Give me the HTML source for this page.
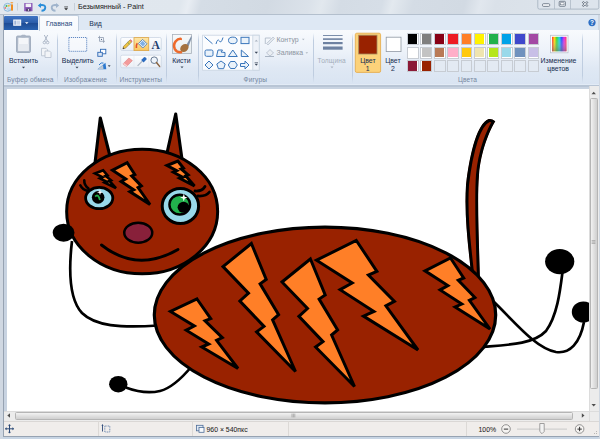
<!DOCTYPE html>
<html><head><meta charset="utf-8">
<style>
*{margin:0;padding:0;box-sizing:border-box}
html,body{width:600px;height:439px;overflow:hidden;background:#c8d5e4;font-family:"Liberation Sans",sans-serif;position:relative}
.a{position:absolute}
.t{position:absolute;white-space:nowrap;font-size:6.9px;color:#1a2f52;line-height:7px;-webkit-text-stroke:0.04px currentColor}
.g{position:absolute;white-space:nowrap;font-size:6.6px;color:#7586a0;line-height:7px;letter-spacing:0.15px}
.sep{position:absolute;width:1px;background:linear-gradient(rgba(190,204,222,0),#bfcde0 15%,#bfcde0 85%,rgba(190,204,222,0))}
.sw{position:absolute;width:12px;height:12px;border:1px solid #c9ced6;background:#e0e8f2}
.sw i{position:absolute;left:1px;top:1px;width:8px;height:8px;border:0}
</style></head><body>
<!-- title bar -->
<div class="a" style="left:0;top:0;width:600px;height:15px;background:linear-gradient(105deg,#e2e8ef 0px,#e0e7ee 175px,#e8edf3 183px,#d5dde6 195px,#d2dae3 260px,#dbe2ea 300px,#e2e8ee 312px,#d4dce5 330px,#d6dee7 370px,#e3e9ef 380px,#d4dce5 400px,#d2dae3 450px,#e1e7ee 465px,#dae1e9 480px,#dfe6ed 600px)"></div>
<div class="a" style="left:0;top:14px;width:600px;height:1px;background:#b3bfcd"></div>
<!-- tab row -->
<div class="a" style="left:3px;top:15px;width:595px;height:15px;background:#dee8f4"></div>
<div class="a" style="left:0;top:15px;width:3px;height:424px;background:#d0d8e2"></div>
<div class="a" style="left:2.7px;top:15px;width:1px;height:421px;background:#97a3b2"></div>
<div class="a" style="left:598px;top:15px;width:2px;height:424px;background:#d0d8e2"></div>



<!-- ribbon -->
<div class="a" style="left:3.5px;top:29.5px;width:595px;height:1px;background:#c3d0e1"></div>
<div class="a" style="left:3.5px;top:30px;width:595px;height:55px;background:linear-gradient(#f8fafd 0%,#eef3fa 35%,#dfe8f4 70%,#d9e4f2 100%)"></div>
<div class="a" style="left:3.5px;top:84px;width:595px;height:1px;background:#e2ebf6"></div>
<div class="a" style="left:3.5px;top:85px;width:595px;height:1.5px;background:#b8c5d5"></div>
<!-- app button -->
<div class="a" style="left:3.5px;top:16px;width:34.5px;height:14px;background:linear-gradient(#3f74c4,#2a5ca8 50%,#1d4b94 51%,#2a62b0);border-radius:1px 1px 0 0"></div>
<!-- tab Главная -->
<div class="a" style="left:39px;top:15.2px;width:39.5px;height:15.5px;background:linear-gradient(#fbfcfe,#f6f9fd);border:1px solid #c0cddd;border-bottom:0;border-radius:2px 2px 0 0"></div>
<div class="t" style="left:46px;top:19.6px;color:#2b4a7e">Главная</div>
<div class="t" style="left:89.3px;top:19.6px;color:#1f3358">Вид</div>
<!-- title text -->
<div class="t" style="left:78px;top:3.4px;font-size:7.2px;color:#202020;-webkit-text-stroke:0">Безымянный - Paint</div>

<!-- ===== RIBBON CONTENT ===== -->
<!-- group separators -->
<div class="sep" style="left:57px;top:33px;height:50px"></div>
<div class="sep" style="left:116px;top:33px;height:50px"></div>
<div class="sep" style="left:166px;top:33px;height:50px"></div>
<div class="sep" style="left:198px;top:33px;height:50px"></div>
<div class="sep" style="left:313px;top:33px;height:50px"></div>
<div class="sep" style="left:352px;top:33px;height:50px"></div>
<div class="sep" style="left:582px;top:33px;height:50px"></div>
<!-- group labels -->
<div class="g" style="left:7px;top:76.4px">Буфер обмена</div>
<div class="g" style="left:64px;top:76.4px">Изображение</div>
<div class="g" style="left:119.5px;top:76.4px">Инструменты</div>
<div class="g" style="left:243.5px;top:76.4px">Фигуры</div>
<div class="g" style="left:458px;top:76.4px">Цвета</div>
<!-- Clipboard -->
<svg class="a" style="left:0;top:0" width="600" height="90" viewBox="0 0 600 90">
 <rect x="16.5" y="36" width="14" height="16.5" rx="1.2" fill="#aeb9c9" stroke="#98a5b8" stroke-width="0.8"/>
 <rect x="18.3" y="37.8" width="10.4" height="13" fill="#f4f6f9"/>
 <rect x="18.3" y="44" width="10.4" height="6.8" fill="#e6eaf0"/>
 <rect x="21.2" y="34.8" width="4.6" height="2.6" rx="1" fill="#aab5c5"/>
 <!-- scissors -->
 <path d="M44.3,35 L47.7,41.5 M47.7,35 L44.3,41.5" stroke="#a3aec0" stroke-width="0.9" fill="none"/>
 <circle cx="44.4" cy="42.5" r="1.3" fill="none" stroke="#a3aec0" stroke-width="0.8"/>
 <circle cx="47.6" cy="42.5" r="1.3" fill="none" stroke="#a3aec0" stroke-width="0.8"/>
 <!-- copy -->
 <path d="M41.5,48.3 h4.5 l1.5,1.5 v6 h-6z" fill="#f2f4f7" stroke="#b5bfcd" stroke-width="0.8"/>
 <path d="M45,51 h4.5 l1.5,1.5 v5 h-6z" fill="#f2f4f7" stroke="#b5bfcd" stroke-width="0.8"/>
 <!-- arrows -->
 <path d="M22,66.8 h3 l-1.5,1.7z" fill="#3d4a5c"/>
 <path d="M75.5,66.8 h3 l-1.5,1.7z" fill="#3d4a5c"/>
 <path d="M180.5,66.6 h3 l-1.5,1.7z" fill="#3d4a5c"/>
 <path d="M330.5,66.6 h3 l-1.5,1.7z" fill="#a9b2bf"/>
 <!-- select dotted rect -->
 <rect x="68.9" y="37.5" width="17.8" height="13.8" fill="#fbfcfe" fill-opacity="0.5" stroke="#3a6cb4" stroke-width="0.9" stroke-dasharray="1 1"/>
 <!-- crop -->
 <path d="M99.5,35.8 v5.5 h5.5 M98,37.5 h5.5 v5.3" stroke="#8f9cb0" stroke-width="0.8" fill="none"/>
 <circle cx="101.5" cy="39.4" r="0.6" fill="#5c6f8c"/>
 <!-- resize -->
 <rect x="100.5" y="49.3" width="5.3" height="4.5" fill="#fff" stroke="#2f69b5" stroke-width="0.9"/>
 <rect x="97.8" y="52.3" width="4.5" height="4" fill="#dbe7f6" stroke="#2f69b5" stroke-width="0.9"/>
 <!-- rotate -->
 <path d="M97.5,69.3 L105.5,62.8 L106.3,69.3z" fill="#2a78cf"/>
 <path d="M97.5,69.3 L103,65 L103.5,69.3z" fill="#bcc7d4"/>
 <path d="M99,65 Q101,62 103.5,63" stroke="#2a78cf" stroke-width="1" fill="none"/>
 <path d="M107.8,65.3 h2.8 l-1.4,1.6z" fill="#3d4a5c"/>
 <!-- tools group frame -->
 <defs><linearGradient id="tb" x1="0" x2="0" y1="0" y2="1"><stop offset="0" stop-color="#fdfeff"/><stop offset="1" stop-color="#e9eef5"/></linearGradient>
 <linearGradient id="hl" x1="0" x2="0" y1="0" y2="1"><stop offset="0" stop-color="#fde5a5"/><stop offset="1" stop-color="#fbc761"/></linearGradient></defs>
 <rect x="120.7" y="37.5" width="40.6" height="13" rx="1.5" fill="url(#tb)" stroke="#ccd6e3" stroke-width="0.8"/>
 <rect x="120.7" y="55.2" width="40.6" height="12.6" rx="1.5" fill="url(#tb)" stroke="#ccd6e3" stroke-width="0.8"/>
 <path d="M134,38 v12 M148.7,38 v12 M134,55.7 v11.6 M148.7,55.7 v11.6" stroke="#e2e8f0" stroke-width="0.6"/>
 <rect x="134" y="37.6" width="14.7" height="13" fill="url(#hl)" stroke="#dea646" stroke-width="0.8"/>
 <!-- pencil -->
 <path d="M122.8,48.9 L123.6,46.3 L129.8,40.1 L131.7,42 L125.5,48.2z" fill="#f0c443" stroke="#6d5a2a" stroke-width="0.45"/>
 <path d="M127.6,42.3 L129.5,44.2" stroke="#5aa05a" stroke-width="0.8"/>
 <path d="M129.8,40.1 L130.6,39.3 L132.5,41.2 L131.7,42z" fill="#e06070"/>
 <path d="M122.8,48.9 L123.3,47.3 L124.4,48.4z" fill="#333"/>
 <!-- fill bucket -->
 <path d="M138.4,43.6 L142.6,39.4 L147,43.8 L142.8,48z" fill="#f4f7fb" stroke="#3b73b9" stroke-width="0.8"/>
 <path d="M139.8,43.4 L142.6,40.8 L145.5,43.8 L142.8,46.5z" fill="#7fb0e6"/>
 <path d="M137.3,43.3 Q136,45 136.4,48" stroke="#e2502a" stroke-width="1.6" fill="none"/>
 <!-- text A -->
 <text x="151.6" y="48.8" font-family="Liberation Serif" font-weight="bold" font-size="11.6" fill="#1f3f6e">A</text>
 <!-- eraser -->
 <path d="M122.9,64 L128.8,58 L132.4,60.6 L126.6,66.5z" fill="#f39a9a" stroke="#d77777" stroke-width="0.5"/>
 <path d="M122.9,64 L126.6,66.5 L127.5,65.6 L123.8,63.1z" fill="#fbd0d0"/>
 <!-- picker -->
 <path d="M137.6,65.8 L142.3,61.1" stroke="#aab4c0" stroke-width="1.2"/>
 <path d="M141.2,60 L144.3,56.9 Q146.8,57 146.7,59.3 L143.6,62.4z" fill="#2c6cc0"/>
 <!-- magnifier -->
 <circle cx="154.2" cy="60.2" r="3.3" fill="#eef4fb" stroke="#5a6e88" stroke-width="0.9"/>
 <path d="M156.5,62.5 L159.6,66.4" stroke="#8a6440" stroke-width="1.5" stroke-linecap="round"/>
 <!-- brushes -->
 <defs><linearGradient id="bf" x1="0" x2="0" y1="0" y2="1"><stop offset="0" stop-color="#f7f9fb"/><stop offset="1" stop-color="#e6ecef"/></linearGradient></defs>
 <rect x="172.5" y="34.5" width="19" height="19" fill="url(#bf)" stroke="#a9b1bb" stroke-width="0.8"/>
 <path d="M180.6,38.8 Q178,38.6 175.5,41.5 Q173,45 174.8,49 Q176.5,52.5 181,52.3" fill="none" stroke="#ee6a2c" stroke-width="2.6" stroke-linecap="round"/>
 <path d="M180.6,38.8 Q181.5,39 181.2,40" fill="none" stroke="#ee6a2c" stroke-width="1.2"/>
 <path d="M186.5,44.8 L191.4,35.8 L191.6,38 L188.6,46.5z" fill="#7e8fa8"/>
 <ellipse cx="184.4" cy="48" rx="4.6" ry="3.6" transform="rotate(-40 184.4 48)" fill="#a4713f"/>
 <!-- shapes gallery -->
 <rect x="202.6" y="35.2" width="56.6" height="35" fill="#fbfcfe" stroke="#c9d4e2" stroke-width="0.8"/>
 <rect x="252.8" y="35.2" width="6.4" height="35" fill="#eef2f8" stroke="#c9d4e2" stroke-width="0.8"/>
 <path d="M254.6,41.6 h3.4 l-1.7,-1.9z" fill="#aab3bf"/>
 <path d="M254.6,51.8 h3.4 l-1.7,1.9z" fill="#3e4a5c"/>
 <path d="M254.6,62.6 h3.4" stroke="#3e4a5c" stroke-width="0.6"/>
 <path d="M254.6,63.8 h3.4 l-1.7,1.9z" fill="#3e4a5c"/>
 <g stroke="#3a76bb" stroke-width="1" fill="#eaf2fa">
  <path d="M204.5,36.8 L212.5,43.8" fill="none"/>
  <path d="M216,44 Q217.5,38 219.5,41 Q221,44 223,37.5" fill="none"/>
  <ellipse cx="232.8" cy="40.4" rx="4.3" ry="3.3"/>
  <rect x="241" y="37.3" width="8" height="6.3"/>
  <rect x="205" y="50" width="8" height="6.3" rx="1.5"/>
  <path d="M216.5,56.5 L218,50 L222.5,50 L221,52 L225,52.5 L225,56.5z"/>
  <path d="M228.3,56.5 L232.8,50 L237.3,56.5z"/>
  <path d="M241.3,50 L241.3,56.5 L248.5,56.5z"/>
  <path d="M209,61 L213,65 L209,69 L205,65z"/>
  <path d="M221,61 L225.2,64 L223.6,68.7 L218.4,68.7 L216.8,64z"/>
  <path d="M230.5,61.5 L235,61.5 L237.3,65 L235,68.5 L230.5,68.5 L228.3,65z"/>
  <path d="M240.5,63.5 h4.5 v-2.5 l4,4 l-4,4 v-2.5 h-4.5z"/>
 </g>
 <!-- outline/fill -->
 <path d="M265.3,44 L265.3,38 L270.8,38" stroke="#aab5c4" stroke-width="0.8" fill="none"/>
 <path d="M266.5,43.5 L273,37 L274.5,38.5 L268,45z" fill="#e2e7ee" stroke="#aab5c4" stroke-width="0.6"/>
 <path d="M302,38.8 h2.6 l-1.3,1.5z" fill="#aeb7c3"/>
 <path d="M265,56 h9 v1 h-9z" fill="#aab5c4"/>
 <path d="M266.5,53 L270,49.5 L273.5,53 L270,56z" fill="#e9edf2" stroke="#aab5c4" stroke-width="0.7"/>
 <path d="M305.5,52.3 h2.6 l-1.3,1.5z" fill="#aeb7c3"/>
 <!-- size lines -->
 <rect x="323" y="35" width="19.6" height="0.9" fill="#6e82a2"/>
 <rect x="323" y="38.3" width="19.6" height="1.6" fill="#6e82a2"/>
 <rect x="323" y="42" width="19.6" height="2.2" fill="#6e82a2"/>
 <rect x="323" y="46.5" width="19.6" height="3.2" fill="#6e82a2"/>
 <!-- color1 button -->
 <rect x="355.3" y="33.2" width="25.3" height="39.2" rx="1.5" fill="#fcd27a" stroke="#e5a845" stroke-width="0.8"/>
 <rect x="358.7" y="35.2" width="18.3" height="18.8" fill="#992200" stroke="#a38a5e" stroke-width="0.8"/>
 <rect x="386.2" y="37.2" width="14.8" height="14.4" fill="#fff" stroke="#8f98a4" stroke-width="0.8"/>
 <!-- edit colors -->
 <defs>
  <linearGradient id="rb" x1="0" x2="1" y1="0" y2="0">
   <stop offset="0" stop-color="#ff2a2a"/><stop offset="0.17" stop-color="#ffd400"/><stop offset="0.33" stop-color="#2fd62f"/><stop offset="0.5" stop-color="#14d6e6"/><stop offset="0.67" stop-color="#2a3cff"/><stop offset="0.83" stop-color="#e22ae6"/><stop offset="1" stop-color="#ff2a5a"/>
  </linearGradient>
  <linearGradient id="rbw" x1="0" x2="0" y1="0" y2="1">
   <stop offset="0" stop-color="#fff" stop-opacity="0"/><stop offset="1" stop-color="#777" stop-opacity="0.6"/>
  </linearGradient>
 </defs>
 <rect x="550.5" y="35.3" width="17.5" height="17.5" fill="#fff" stroke="#b9c2ce" stroke-width="0.8"/>
 <rect x="552" y="36.8" width="14.5" height="14.5" fill="url(#rb)"/>
 <rect x="552" y="36.8" width="14.5" height="14.5" fill="url(#rbw)"/>
</svg>
<!-- ribbon texts -->
<div class="t" style="left:9px;top:57.2px">Вставить</div>
<div class="t" style="left:61.8px;top:57.2px">Выделить</div>
<div class="t" style="left:172.2px;top:57px">Кисти</div>
<div class="t" style="left:276.5px;top:36.2px;color:#8f97a4">Контур</div>
<div class="t" style="left:276.5px;top:49.3px;color:#8f97a4">Заливка</div>
<div class="g" style="left:317.5px;top:57px;color:#a3adba">Толщина</div>
<div class="t" style="left:360.2px;top:57px">Цвет</div>
<div class="t" style="left:365.8px;top:65px">1</div>
<div class="t" style="left:385.2px;top:57px">Цвет</div>
<div class="t" style="left:391px;top:65px">2</div>
<div class="t" style="left:540.6px;top:57px">Изменение</div>
<div class="t" style="left:547.3px;top:65px">цветов</div>
<!-- palette -->
<div class="a" style="left:407.0px;top:33.0px;width:11.8px;height:12px;background:#fff;border:1px solid #c7ccd3"><div class="a" style="left:0.3px;top:0.3px;width:9.2px;height:9.4px;background:#000000"></div></div>
<div class="a" style="left:420.4px;top:33.0px;width:11.8px;height:12px;background:#fff;border:1px solid #c7ccd3"><div class="a" style="left:0.3px;top:0.3px;width:9.2px;height:9.4px;background:#7f7f7f"></div></div>
<div class="a" style="left:433.8px;top:33.0px;width:11.8px;height:12px;background:#fff;border:1px solid #c7ccd3"><div class="a" style="left:0.3px;top:0.3px;width:9.2px;height:9.4px;background:#880015"></div></div>
<div class="a" style="left:447.2px;top:33.0px;width:11.8px;height:12px;background:#fff;border:1px solid #c7ccd3"><div class="a" style="left:0.3px;top:0.3px;width:9.2px;height:9.4px;background:#ed1c24"></div></div>
<div class="a" style="left:460.6px;top:33.0px;width:11.8px;height:12px;background:#fff;border:1px solid #c7ccd3"><div class="a" style="left:0.3px;top:0.3px;width:9.2px;height:9.4px;background:#ff7f27"></div></div>
<div class="a" style="left:474.0px;top:33.0px;width:11.8px;height:12px;background:#fff;border:1px solid #c7ccd3"><div class="a" style="left:0.3px;top:0.3px;width:9.2px;height:9.4px;background:#fff200"></div></div>
<div class="a" style="left:487.4px;top:33.0px;width:11.8px;height:12px;background:#fff;border:1px solid #c7ccd3"><div class="a" style="left:0.3px;top:0.3px;width:9.2px;height:9.4px;background:#22b14c"></div></div>
<div class="a" style="left:500.8px;top:33.0px;width:11.8px;height:12px;background:#fff;border:1px solid #c7ccd3"><div class="a" style="left:0.3px;top:0.3px;width:9.2px;height:9.4px;background:#00a2e8"></div></div>
<div class="a" style="left:514.2px;top:33.0px;width:11.8px;height:12px;background:#fff;border:1px solid #c7ccd3"><div class="a" style="left:0.3px;top:0.3px;width:9.2px;height:9.4px;background:#3f48cc"></div></div>
<div class="a" style="left:527.6px;top:33.0px;width:11.8px;height:12px;background:#fff;border:1px solid #c7ccd3"><div class="a" style="left:0.3px;top:0.3px;width:9.2px;height:9.4px;background:#a349a4"></div></div>
<div class="a" style="left:407.0px;top:46.5px;width:11.8px;height:12px;background:#fff;border:1px solid #c7ccd3"><div class="a" style="left:0.3px;top:0.3px;width:9.2px;height:9.4px;background:#ffffff"></div></div>
<div class="a" style="left:420.4px;top:46.5px;width:11.8px;height:12px;background:#fff;border:1px solid #c7ccd3"><div class="a" style="left:0.3px;top:0.3px;width:9.2px;height:9.4px;background:#c3c3c3"></div></div>
<div class="a" style="left:433.8px;top:46.5px;width:11.8px;height:12px;background:#fff;border:1px solid #c7ccd3"><div class="a" style="left:0.3px;top:0.3px;width:9.2px;height:9.4px;background:#b97a57"></div></div>
<div class="a" style="left:447.2px;top:46.5px;width:11.8px;height:12px;background:#fff;border:1px solid #c7ccd3"><div class="a" style="left:0.3px;top:0.3px;width:9.2px;height:9.4px;background:#ffaec9"></div></div>
<div class="a" style="left:460.6px;top:46.5px;width:11.8px;height:12px;background:#fff;border:1px solid #c7ccd3"><div class="a" style="left:0.3px;top:0.3px;width:9.2px;height:9.4px;background:#ffc90e"></div></div>
<div class="a" style="left:474.0px;top:46.5px;width:11.8px;height:12px;background:#fff;border:1px solid #c7ccd3"><div class="a" style="left:0.3px;top:0.3px;width:9.2px;height:9.4px;background:#efe4b0"></div></div>
<div class="a" style="left:487.4px;top:46.5px;width:11.8px;height:12px;background:#fff;border:1px solid #c7ccd3"><div class="a" style="left:0.3px;top:0.3px;width:9.2px;height:9.4px;background:#b5e61d"></div></div>
<div class="a" style="left:500.8px;top:46.5px;width:11.8px;height:12px;background:#fff;border:1px solid #c7ccd3"><div class="a" style="left:0.3px;top:0.3px;width:9.2px;height:9.4px;background:#99d9ea"></div></div>
<div class="a" style="left:514.2px;top:46.5px;width:11.8px;height:12px;background:#fff;border:1px solid #c7ccd3"><div class="a" style="left:0.3px;top:0.3px;width:9.2px;height:9.4px;background:#7092be"></div></div>
<div class="a" style="left:527.6px;top:46.5px;width:11.8px;height:12px;background:#fff;border:1px solid #c7ccd3"><div class="a" style="left:0.3px;top:0.3px;width:9.2px;height:9.4px;background:#c8bfe7"></div></div>
<div class="a" style="left:407.0px;top:60.0px;width:11.8px;height:12px;background:#fff;border:1px solid #c7ccd3"><div class="a" style="left:0.3px;top:0.3px;width:9.2px;height:9.4px;background:#8b1a37"></div></div>
<div class="a" style="left:420.4px;top:60.0px;width:11.8px;height:12px;background:#fff;border:1px solid #c7ccd3"><div class="a" style="left:0.3px;top:0.3px;width:9.2px;height:9.4px;background:#992200"></div></div>
<div class="a" style="left:433.8px;top:60.0px;width:11.8px;height:12px;background:#e3eaf3;border:1px solid #c7ccd3"></div>
<div class="a" style="left:447.2px;top:60.0px;width:11.8px;height:12px;background:#e3eaf3;border:1px solid #c7ccd3"></div>
<div class="a" style="left:460.6px;top:60.0px;width:11.8px;height:12px;background:#e3eaf3;border:1px solid #c7ccd3"></div>
<div class="a" style="left:474.0px;top:60.0px;width:11.8px;height:12px;background:#e3eaf3;border:1px solid #c7ccd3"></div>
<div class="a" style="left:487.4px;top:60.0px;width:11.8px;height:12px;background:#e3eaf3;border:1px solid #c7ccd3"></div>
<div class="a" style="left:500.8px;top:60.0px;width:11.8px;height:12px;background:#e3eaf3;border:1px solid #c7ccd3"></div>
<div class="a" style="left:514.2px;top:60.0px;width:11.8px;height:12px;background:#e3eaf3;border:1px solid #c7ccd3"></div>
<div class="a" style="left:527.6px;top:60.0px;width:11.8px;height:12px;background:#e3eaf3;border:1px solid #c7ccd3"></div>

<!-- quick access -->
<svg class="a" style="left:0;top:0" width="600" height="32" viewBox="0 0 600 32">
 <!-- paint app icon -->
 <circle cx="7.7" cy="7.3" r="4" fill="#d6e6f3" stroke="#8db9dc" stroke-width="1"/>
 <circle cx="6.5" cy="6" r="1" fill="#49b84a"/>
 <circle cx="8.8" cy="5.7" r="1" fill="#f4b73a"/>
 <circle cx="5.3" cy="7.9" r="0.9" fill="#e9776a"/>
 <circle cx="8.5" cy="9" r="0.9" fill="#eef4fa" stroke="#8db9dc" stroke-width="0.6"/>
 <rect x="11" y="4.3" width="2" height="6.4" rx="0.8" fill="#f08c1e"/>
 <ellipse cx="11.8" cy="2.7" rx="1.5" ry="0.8" fill="#f3a24a"/>
 <rect x="17" y="3" width="0.8" height="7.5" fill="#bfc8d3"/>
 <!-- save -->
 <rect x="24.2" y="3" width="8.3" height="8.3" rx="0.6" fill="#8b5ab8"/>
 <rect x="25.6" y="3.6" width="5.5" height="3.4" fill="#f2f0f6"/>
 <rect x="26.2" y="8.6" width="4.3" height="2.7" fill="#4c3a66"/>
 <rect x="27.9" y="9" width="1.2" height="1.8" fill="#d8d0e6"/>
 <!-- undo -->
 <path d="M39.5,5.3 Q45.5,4.2 45.3,7.6 Q45,10.8 41.5,10.8" stroke="#2b8ed8" stroke-width="1.9" fill="none"/>
 <path d="M37.8,5.4 L41,2.9 L41,7.9z" fill="#2b8ed8"/>
 <!-- redo -->
 <path d="M57.5,5.3 Q51.5,4.2 51.7,7.6 Q52,10.8 55.5,10.8" stroke="#9fb4cc" stroke-width="1.9" fill="none"/>
 <path d="M59.2,5.4 L56,2.9 L56,7.9z" fill="#9fb4cc"/>
 <!-- customize -->
 <rect x="64.2" y="6.6" width="3.8" height="0.7" fill="#222"/>
 <path d="M64.2,8.2 h3.8 l-1.9,2z" fill="#222"/>
 <rect x="74" y="3" width="0.8" height="7.5" fill="#bfc8d3"/>
 <!-- app button icon -->
 <rect x="13.2" y="19.5" width="8" height="6.3" fill="#fff" opacity="0.95"/>
 <rect x="14.3" y="20.6" width="2" height="4.1" fill="#9db3d6"/>
 <rect x="16.9" y="20.6" width="3.2" height="4.1" fill="#c9d6ea"/>
 <path d="M25,22.2 h3.5 l-1.75,1.9z" fill="#fff"/>
 <!-- window buttons -->
 <path d="M537.8,0 v7.5 q0,1.6 1.6,1.6 h57.8 q1.6,0 1.6,-1.6 v-7.5" fill="#dde4ec" stroke="#9aa7b6" stroke-width="0.7"/>
 <rect x="554.3" y="0" width="0.7" height="9" fill="#aab5c2"/>
 <rect x="570.3" y="0" width="0.7" height="9" fill="#aab5c2"/>
 <rect x="542.5" y="3.7" width="7.2" height="2.7" rx="1" fill="#f4f6f9" stroke="#5f6b7a" stroke-width="0.8"/>
 <rect x="559.2" y="1.3" width="6.2" height="5" rx="0.8" fill="#e8ecf1" stroke="#5f6b7a" stroke-width="0.8"/>
 <rect x="560.6" y="2.8" width="3.4" height="2" fill="#fff" stroke="#5f6b7a" stroke-width="0.5"/>
 <path d="M582.5,1.7 L587.8,6.2 M587.8,1.7 L582.5,6.2" stroke="#5f6b7a" stroke-width="2"/>
 <path d="M582.5,1.7 L587.8,6.2 M587.8,1.7 L582.5,6.2" stroke="#f4f6f9" stroke-width="0.9"/>
 <!-- help -->
 <circle cx="592" cy="22.6" r="3.6" fill="#2e6fc4"/>
 <text x="590.1" y="25.2" font-family="Liberation Sans" font-weight="bold" font-size="6.5" fill="#fff">?</text>
</svg>
<!-- workspace -->
<div class="a" style="left:3.5px;top:86.5px;width:585.5px;height:324.5px;background:#c8d3e1"></div>
<div class="a" style="left:6.7px;top:89px;width:582.3px;height:322px;background:#fff"></div>
<svg class="a" style="left:0;top:0" width="600" height="439" viewBox="0 0 600 439"><defs><clipPath id="ctail"><path d="M488.7,119.1 C478,123 470,150 466,185 C464,215 468,245 472,282 L480,282 C479,240 477,200 479,175 C481,150 490,130 495.3,121.3 Q492,118.5 488.7,119.1Z"/></clipPath><clipPath id="cv"><rect x="6.7" y="89" width="582.3" height="322"/></clipPath></defs><g clip-path="url(#cv)"><g clip-path="url(#ctail)"><path d="M488.7,119.1 C478,123 470,150 466,185 C464,215 468,245 472,282 L480,282 C479,240 477,200 479,175 C481,150 490,130 495.3,121.3 Q492,118.5 488.7,119.1Z" fill="#992200" stroke="#000" stroke-width="6" stroke-linejoin="round"/></g><path d="M72,241 C68,275 70,300 82,313 C95,326 120,328 158,325.5" fill="none" stroke="#000" stroke-width="2.7"/><path d="M125.8,387.5 C135,391 147,394 160,391 C172,388 182,378 192,366" fill="none" stroke="#000" stroke-width="2.7"/><ellipse cx="118.3" cy="384.2" rx="9.20" ry="8.30" fill="#000" stroke="#000" stroke-width="0"/><path d="M562.5,272 C560,292 557,316 546,331 C533,345 505,345 480,347" fill="none" stroke="#000" stroke-width="2.7"/><path d="M492,300 C515,322 535,348 556,352 C570,354 580,343 584,322" fill="none" stroke="#000" stroke-width="2.7"/><ellipse cx="559.7" cy="261.6" rx="14.60" ry="12.60" fill="#000" stroke="#000" stroke-width="0"/><ellipse cx="583.3" cy="312" rx="11.50" ry="10.50" fill="#000" stroke="#000" stroke-width="0"/><polygon points="100.3,118 93.6,175 114.8,175" fill="#992200" stroke="#000" stroke-width="3.1" stroke-linejoin="round"/><polygon points="175.7,114 163.2,170 183.5,170" fill="#992200" stroke="#000" stroke-width="3.1" stroke-linejoin="round"/><ellipse cx="142.15" cy="211.5" rx="75.50" ry="62.30" fill="#992200" stroke="#000" stroke-width="3.0"/><polygon points="127.2,162.7 134.8,174.5 131.7,175.9 141.3,185.9 138.1,187.6 150.0,204.5 129.9,191.6 133.7,189.8 121.2,181.5 125.7,178.9 112.5,170.2" fill="#ff7f27" stroke="#000" stroke-width="3.0" stroke-linejoin="miter" stroke-miterlimit="4"/><polygon points="177.8,161.0 183.4,168.0 181.1,168.9 188.1,174.9 185.8,175.9 194.5,186.0 179.7,178.3 182.6,177.2 173.4,172.2 176.7,170.7 167.0,165.5" fill="#ff7f27" stroke="#000" stroke-width="3.0" stroke-linejoin="miter" stroke-miterlimit="4"/><polygon points="103.2,170.3 107.5,175.3 105.7,175.9 111.1,180.3 109.4,181.0 116.0,188.2 104.7,182.7 106.9,181.9 99.9,178.3 102.4,177.2 95.0,173.5" fill="#ff7f27" stroke="#000" stroke-width="2.6" stroke-linejoin="miter" stroke-miterlimit="4"/><ellipse cx="63.6" cy="232.7" rx="10.90" ry="9.00" fill="#000" stroke="#000" stroke-width="0"/><path d="M84.3,180.3 Q84,185 88.5,188.5 M80.3,185.3 Q82.5,189.8 88,191" fill="none" stroke="#000" stroke-width="2.6" stroke-linecap="round"/><path d="M195,191 Q202,191.5 205,186.5 M198,196 Q206,196.5 209.5,192" fill="none" stroke="#000" stroke-width="2.8" stroke-linecap="round"/><ellipse cx="99.2" cy="198.05" rx="13.60" ry="10.60" fill="#99d9ea" stroke="#000" stroke-width="2.8"/><ellipse cx="98.15" cy="197.35" rx="6.30" ry="6.30" fill="#000" stroke="#000" stroke-width="0"/><path d="M95.2,196.6 Q98.2,193 99.9,200" fill="none" stroke="#22b14c" stroke-width="1.8"/><ellipse cx="180.4" cy="206" rx="18.20" ry="17.60" fill="#99d9ea" stroke="#000" stroke-width="3.0"/><ellipse cx="179.75" cy="204.6" rx="10.35" ry="9.90" fill="#22b14c" stroke="#000" stroke-width="2.4"/><ellipse cx="183.5" cy="207.3" rx="5.90" ry="5.50" fill="#000" stroke="#000" stroke-width="0"/><path d="M100,189.3 L100.75,191.55 L103.0,192.3 L100.75,193.05 L100,195.3 L99.25,193.05 L97.0,192.3 L99.25,191.55Z" fill="#fff"/><path d="M183.8,193.79999999999998 L184.75,196.65 L187.60000000000002,197.6 L184.75,198.54999999999998 L183.8,201.4 L182.85000000000002,198.54999999999998 L180.0,197.6 L182.85000000000002,196.65Z" fill="#fff"/><ellipse cx="138.25" cy="232.75" rx="14.00" ry="10.00" fill="#88203a" stroke="#000" stroke-width="2.5"/><path d="M101.5,245 Q137,273 178,249.5" fill="none" stroke="#000" stroke-width="2.9" stroke-linecap="round"/><ellipse cx="325" cy="315" rx="170.70" ry="87.90" fill="#992200" stroke="#000" stroke-width="3.2"/><polygon points="197.0,299.0 210.7,318.6 205.0,320.9 222.3,337.6 216.6,340.4 238.0,368.5 201.8,347.0 208.7,344.0 186.2,330.2 194.3,326.0 170.5,311.5" fill="#ff7f27" stroke="#000" stroke-width="3.0" stroke-linejoin="miter" stroke-miterlimit="4"/><polygon points="251.4,243.5 266.2,279.5 260.1,283.8 278.6,314.7 272.6,319.8 295.5,371.5 256.6,331.9 264.0,326.4 239.9,301.0 248.5,293.2 223.0,266.6" fill="#ff7f27" stroke="#000" stroke-width="3.0" stroke-linejoin="miter" stroke-miterlimit="4"/><polygon points="310.4,259.0 325.2,294.9 319.1,299.1 337.6,329.9 331.6,335.0 354.5,386.5 315.6,347.0 323.0,341.6 298.9,316.3 307.5,308.5 282.0,282.0" fill="#ff7f27" stroke="#000" stroke-width="3.0" stroke-linejoin="miter" stroke-miterlimit="4"/><polygon points="356.3,240.5 376.9,271.3 368.4,275.0 394.4,301.4 385.9,305.8 418.0,350.0 363.5,316.1 373.9,311.4 340.1,289.7 352.2,283.0 316.5,260.2" fill="#ff7f27" stroke="#000" stroke-width="3.0" stroke-linejoin="miter" stroke-miterlimit="4"/><polygon points="450.5,258.0 463.7,278.0 458.3,280.3 474.9,297.5 469.4,300.3 490.0,329.0 455.1,307.0 461.8,304.0 440.1,289.9 447.9,285.6 425.0,270.8" fill="#ff7f27" stroke="#000" stroke-width="3.0" stroke-linejoin="miter" stroke-miterlimit="4"/></g></svg>
<!-- v scrollbar -->
<div class="a" style="left:589px;top:85.5px;width:9.5px;height:335px;background:#ececec;border-left:1px solid #dcdcdc"></div>
<div class="a" style="left:589.5px;top:97.5px;width:8.5px;height:291px;background:linear-gradient(90deg,#f2f2f2,#e0e0e0 50%,#cfcfcf);border:1px solid #b5b5b5;border-radius:1.5px"></div>
<!-- h scrollbar -->
<div class="a" style="left:3.5px;top:411px;width:595px;height:9.5px;background:#ececec;border-top:1px solid #dcdcdc"></div>
<div class="a" style="left:14.5px;top:411.5px;width:558px;height:8.5px;background:linear-gradient(#f2f2f2,#e0e0e0 50%,#cfcfcf);border:1px solid #b5b5b5;border-radius:1.5px"></div>
<div class="a" style="left:589px;top:410.5px;width:9.5px;height:10px;background:#ececec;border-left:1px solid #dcdcdc;border-top:1px solid #dcdcdc"></div>
<!-- status bar -->
<div class="a" style="left:3.5px;top:420.5px;width:595px;height:15.5px;background:#f0edeb;border-top:1px solid #dad7d5"></div>
<div class="a" style="left:3px;top:436px;width:596px;height:1px;background:#97a3b2"></div>
<div class="a" style="left:98px;top:421px;width:1px;height:15px;background:#dcd9d6"></div>
<div class="a" style="left:192px;top:421px;width:1px;height:15px;background:#dcd9d6"></div>
<div class="a" style="left:288px;top:421px;width:1px;height:15px;background:#dcd9d6"></div>
<div class="a" style="left:466px;top:421px;width:1px;height:15px;background:#dcd9d6"></div>
<div class="t" style="left:206.5px;top:426px;color:#222">960 × 540пкс</div>
<div class="t" style="left:478.5px;top:426px;color:#222">100%</div>

<svg class="a" style="left:0;top:0" width="600" height="439" viewBox="0 0 600 439">
 <!-- h scroll arrows -->
 <path d="M7.3,415.5 L10,413.3 L10,417.7z" fill="#4e4e4e"/>
 <path d="M584.5,415.5 L581.8,413.3 L581.8,417.7z" fill="#4e4e4e"/>
 <!-- v scroll arrows -->
 <path d="M593.7,91.8 L591.5,94.3 L595.9,94.3z" fill="#4e4e4e"/>
 <path d="M593.7,406.5 L591.5,404 L595.9,404z" fill="#4e4e4e"/>
 <!-- grips -->
 <g stroke="#8a8a8a" stroke-width="0.6">
  <path d="M292,413.6 v3.8 M293.4,413.6 v3.8 M294.8,413.6 v3.8"/>
  <path d="M591.6,240.6 h3.8 M591.6,242 h3.8 M591.6,243.4 h3.8"/>
 </g>
 <!-- move icon -->
 <g stroke="#2d4a78" stroke-width="1" fill="#2d4a78">
  <path d="M9.5,425 v7.5 M5.8,428.8 h7.5"/>
  <path d="M9.5,424.2 l-1.2,1.4 h2.4z M9.5,433.3 l-1.2,-1.4 h2.4z M5,428.8 l1.4,-1.2 v2.4z M14,428.8 l-1.4,-1.2 v2.4z" stroke-width="0.3"/>
 </g>
 <!-- selection size icon -->
 <path d="M102.5,424.5 v7" stroke="#2d4a78" stroke-width="0.9"/>
 <path d="M101.3,425.8 l1.2,-1.4 l1.2,1.4z" fill="#2d4a78"/>
 <rect x="104.8" y="426" width="5" height="6" fill="none" stroke="#5878a6" stroke-width="0.8" stroke-dasharray="1 0.6"/>
 <!-- image size icon -->
 <rect x="196.5" y="425.3" width="6.5" height="5.5" fill="#dfe8f3" stroke="#4d6d98" stroke-width="0.8"/>
 <rect x="199" y="427.5" width="5" height="4.8" fill="#f7f9fc" stroke="#4d6d98" stroke-width="0.8"/>
 <!-- zoom -->
 <circle cx="506" cy="429" r="4.3" fill="#f6f4f2" stroke="#7b7b7b" stroke-width="0.8"/>
 <rect x="503.8" y="428.6" width="4.4" height="1" fill="#333"/>
 <rect x="517" y="428.6" width="50" height="1" fill="#c9c9c9"/>
 <path d="M539.8,423.5 h4.4 v8 l-2.2,2.2 l-2.2,-2.2z" fill="#f3f3f3" stroke="#8a8a8a" stroke-width="0.8"/>
 <circle cx="579.6" cy="429" r="4.3" fill="#f6f4f2" stroke="#7b7b7b" stroke-width="0.8"/>
 <rect x="577.4" y="428.6" width="4.4" height="1" fill="#333"/>
 <rect x="579.1" y="426.8" width="1" height="4.4" fill="#333"/>
 <g fill="#b9b6b3"><rect x="594" y="433" width="1" height="1"/><rect x="596" y="433" width="1" height="1"/><rect x="596" y="431" width="1" height="1"/></g>
</svg>

</body></html>
